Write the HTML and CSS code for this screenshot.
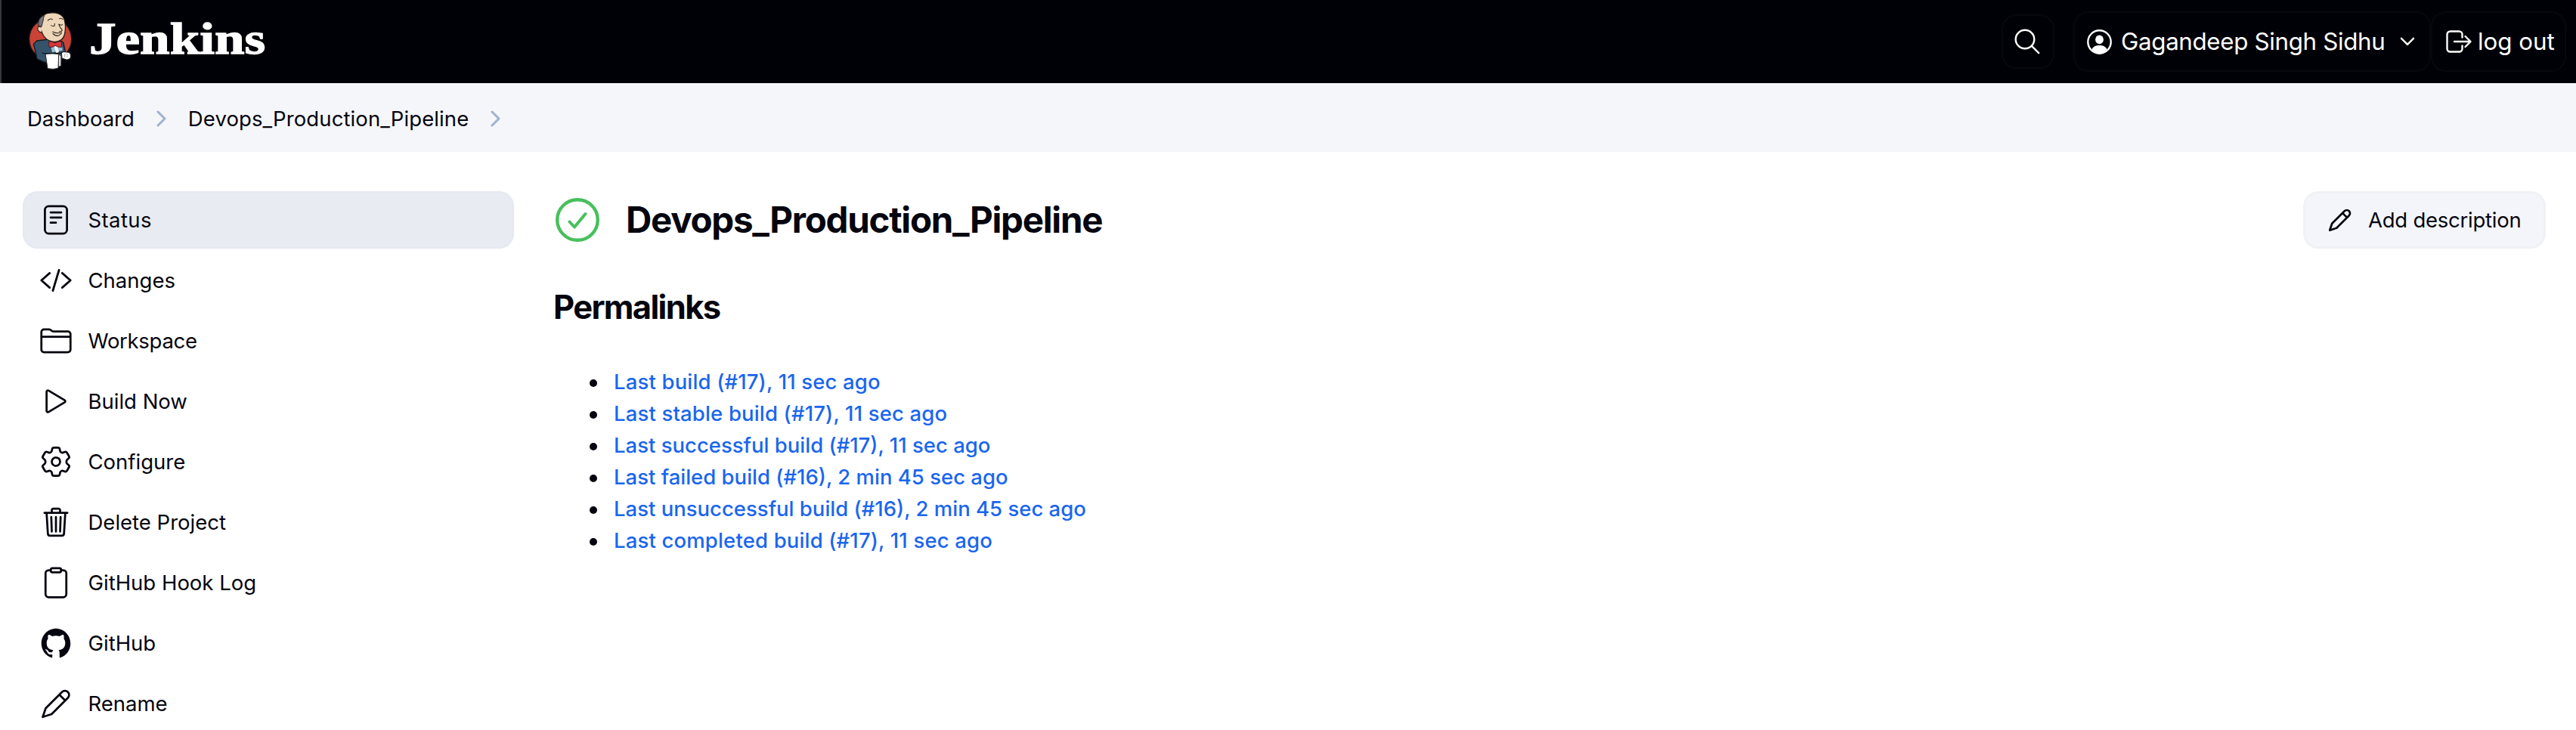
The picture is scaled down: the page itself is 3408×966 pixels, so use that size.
FILE: index.html
```html
<!DOCTYPE html>
<html lang="en">
<head>
<meta charset="utf-8">
<title>Devops_Production_Pipeline [Jenkins]</title>
<link rel="stylesheet" href="styles.css">
</head>
<body>
<header class="header">
  <svg class="logo" viewBox="0 0 270 300" aria-hidden="true">
    <ellipse cx="140" cy="155" rx="84" ry="83" fill="#cb4238" stroke="#241c1c" stroke-width="4"/>
    <path d="M86 162l-13 14 8 28 6 30 30 13 66-2 3-33 14-4-9-40-27-16z" fill="#35536a" stroke="#141a20" stroke-width="4" stroke-linejoin="round"/>
    <path d="M94 100C95 75 106 58 132 52c30-6 58 4 64 28 5 20 4 42 0 58-5 18-17 27-36 28-30 0-48-18-56-44l-10-8z" fill="#eed7b9" stroke="#241c18" stroke-width="4" stroke-linejoin="round"/>
    <path d="M94 106c-5-20 0-36 23-46-6 10-3 16-7 26-3 6-2 12-5 20-4-4-7-4-11 0z" fill="#77767c" stroke="#2a2a2e" stroke-width="3"/>
    <path d="M103 108c-12-6-16 2-12 12 4 7 9 9 14 8" fill="#eed7b9" stroke="#2c221c" stroke-width="3.5" stroke-linecap="round"/>
    <g fill="none" stroke="#33271f" stroke-width="3.2" stroke-linecap="round" stroke-linejoin="round">
      <path d="M130 81q9-9 18-4M176 74q8-3 13 3M143 101q7 5 13 2l1-9M176 97q6 5 12 1M173 96q5 14 14 23-1 7-12 6M149 126q14 8 36 4M150 133q8 10 22 9l11-8"/>
    </g>
    <path d="M137 164l20 28 26-28 6 36-42 8z" fill="#9cbbd0"/>
    <path d="M152 180l14-2 8 28-10 6z" fill="#f2f3f5"/>
    <path d="M134 165q12-2 24 6 12-8 26-6l1 22q-13 2-26-6-12 8-23 7-3-12-2-23z" fill="#d9363b" stroke="#52191b" stroke-width="3" stroke-linejoin="round"/>
    <path d="M184 210l8-5 22 3q9 6 6 22-5 8-16 7l-18-6z" fill="#fff" stroke="#27272a" stroke-width="3.5" stroke-linejoin="round"/>
    <path d="M198 213l-2 14M204 215l6 3M203 222l6 3" stroke="#777" stroke-width="2"/>
    <path d="M172 215l10 8v38l-10 4z" fill="#e2e3e5" stroke="#333" stroke-width="2"/>
    <path d="M120 214q30-4 53 1l-2 56q-20 6-42 1z" fill="#fff" stroke="#222327" stroke-width="3"/>
    <path d="M108 210q10 5 22 2l54-1" fill="none" stroke="#101518" stroke-width="4" stroke-linecap="round"/>
  </svg>
  <span class="brand"><span class="brand-text">Jenkins</span></span>
  <div class="header-actions">
    <span class="header-button search">
      <svg width="40" height="40" viewBox="0 0 40 40" fill="none" stroke="#fff" stroke-width="2.4" stroke-linecap="round"><circle cx="17" cy="17" r="12.3"/><path d="M26.2 26.2l9 9"/></svg>
    </span>
    <span class="header-button user">
      <svg width="33" height="33" viewBox="0 0 33 33"><circle cx="16.5" cy="16.5" r="15.2" fill="none" stroke="#fff" stroke-width="2.4"/><ellipse cx="16.5" cy="13.4" rx="5.4" ry="5.8" fill="#fff"/><path d="M6.4 26.2C8.5 22.2 12.5 21 16.5 21s8 1.2 10.1 5.2C24 30 20 31.5 16.5 31.5S9 30 6.4 26.2z" fill="#fff"/></svg>
      <span class="user-name">Gagandeep Singh Sidhu</span>
      <svg class="caret" width="20" height="12" viewBox="0 0 20 12" fill="none" stroke="#fff" stroke-width="2.4" stroke-linecap="round" stroke-linejoin="round"><path d="M2 1.8l8 8 8-8"/></svg>
    </span>
    <span class="header-button logout">
      <svg width="34" height="30" viewBox="0 0 34 30" fill="none" stroke="#fff" stroke-width="2.4" stroke-linecap="round" stroke-linejoin="round"><path d="M21.5 9.5V5.5a4 4 0 0 0-4-4h-12a4 4 0 0 0-4 4v19a4 4 0 0 0 4 4h12a4 4 0 0 0 4-4v-4M25.5 8l7 7-7 7M11 15h21"/></svg>
      <span>log out</span>
    </span>
  </div>
</header>

<nav class="breadcrumbs">
  <span>Dashboard</span>
  <svg class="crumb-arrow" width="14" height="22" viewBox="0 0 14 22"><path d="M2 2l9 9-9 9"/></svg>
  <span class="crumb-project">Devops_Production_Pipeline</span>
  <svg class="crumb-arrow" width="14" height="22" viewBox="0 0 14 22"><path d="M2 2l9 9-9 9"/></svg>
</nav>

<div class="page">
  <aside class="tasks">
    <a class="task active"><svg class="icon" viewBox="0 0 44 44"><rect x="7.4" y="3.9" width="29.2" height="36.2" rx="5"/><path d="M15 12h14M15 18.8h14M15 25.7h7"/></svg>Status</a>
    <a class="task"><svg class="icon" viewBox="0 0 512 512"><path class="w" d="M160 368L32 256l128-112M352 368l128-112-128-112M304 96l-96 320"/></svg>Changes</a>
    <a class="task workspace"><svg class="icon" viewBox="0 0 512 512"><path class="w" d="M440 432H72a40 40 0 01-40-40V120a40 40 0 0140-40h75.89a40 40 0 0122.19 6.72l27.84 18.56a40 40 0 0022.19 6.72H440a40 40 0 0140 40v240a40 40 0 01-40 40zM32 192h448"/></svg>Workspace</a>
    <a class="task"><svg class="icon" viewBox="0 0 512 512"><path class="w" d="M112 111v290c0 17.44 17 28.52 31 20.16l247.9-148.37c12.12-7.25 12.12-26.33 0-33.58L143 90.84c-14-8.36-31 2.72-31 20.16z"/></svg>Build Now</a>
    <a class="task"><svg class="icon" viewBox="0 0 512 512"><path class="w" d="M262.29 192.31a64 64 0 1057.4 57.4 64.13 64.13 0 00-57.4-57.4z"/><path class="w" d="M198 60q4-22 26-22h64q22 0 26 22l6 30q3 14 18 22t28 3l28-10q20-7 31 11l32 56q10 18-5 31l-23 20q-12 11-12 33t12 33l23 20q15 13 5 31l-32 56q-11 18-31 11l-28-10q-13-5-28 3t-18 22l-6 30q-4 22-26 22h-64q-22 0-26-22l-6-30q-3-14-18-22t-28-3l-28 10q-20 7-31-11l-32-56q-10-18 5-31l23-20q12-11 12-33t-12-33l-23-20q-15-13-5-31l32-56q11-18 31-11l28 10q13 5 28-3t18-22z"/></svg>Configure</a>
    <a class="task"><svg class="icon" viewBox="0 0 512 512"><path class="w" d="M112 112l20 320c.95 18.49 14.4 32 32 32h184c17.67 0 30.87-13.51 32-32l20-320M80 112h352M192 112V72a23.93 23.93 0 0124-24h80a23.93 23.93 0 0124 24v40M256 176v224M184 176l8 224M328 176l-8 224"/></svg>Delete Project</a>
    <a class="task"><svg class="icon" viewBox="0 0 512 512"><path class="w" d="M336 64h32a48 48 0 0148 48v320a48 48 0 01-48 48H144a48 48 0 01-48-48V112a48 48 0 0148-48h32"/><rect class="w" x="176" y="32" width="160" height="64" rx="26"/></svg>GitHub Hook Log</a>
    <a class="task"><svg class="icon solid" viewBox="0 0 512 512"><path d="M256 32C132.3 32 32 134.9 32 261.7c0 101.5 64.2 187.5 153.2 217.9a17.56 17.56 0 003.8.4c8.3 0 11.5-6.1 11.5-11.4 0-5.5-.2-19.9-.3-39.1a102.4 102.4 0 01-22.6 2.7c-43.1 0-52.9-33.5-52.9-33.5-10.2-26.5-24.9-33.6-24.9-33.6-19.5-13.7-.1-14.1 1.4-14.1h.1c22.5 2 34.3 23.8 34.3 23.8 11.2 19.6 26.2 25.1 39.6 25.1a63 63 0 0025.6-6c2-14.8 7.8-24.9 14.2-30.7-49.7-5.8-102-25.5-102-113.5 0-25.1 8.7-45.6 23-61.6-2.3-5.8-10-29.2 2.2-60.8a18.64 18.64 0 015-.5c8.1 0 26.4 3.1 56.6 24.1a208.21 208.21 0 01112.2 0c30.2-21 48.5-24.1 56.6-24.1a18.64 18.64 0 015 .5c12.2 31.6 4.5 55 2.2 60.8 14.3 16.1 23 36.6 23 61.6 0 88.2-52.4 107.6-102.3 113.3 8 7.1 15.2 21.1 15.2 42.5 0 30.7-.3 55.5-.3 63 0 5.4 3.1 11.5 11.4 11.5a19.35 19.35 0 004-.4C415.9 449.2 480 363.1 480 261.7 480 134.9 379.7 32 256 32z"/></svg>GitHub</a>
    <a class="task"><svg class="icon" viewBox="0 0 44 44"><path d="M4.5 39.8L8.5 28.2 30 6.7a5.5 5.5 0 0 1 7.8 7.8L16.3 36zM26.5 10.2l7.8 7.8"/></svg>Rename</a>
  </aside>

  <main class="main">
    <div class="title-row">
      <svg class="ball" viewBox="0 0 58 58"><circle cx="29" cy="29" r="26.8" stroke-width="4.4"/><path d="M18.5 31.5l6.5 7L39.5 21" stroke-width="4"/></svg>
      <h1>Devops_Production_Pipeline</h1>
      <a class="describe"><svg class="describe-icon" viewBox="3 2.5 39 39"><path d="M4.5 39.8L8.5 28.2 30 6.7a5.5 5.5 0 0 1 7.8 7.8L16.3 36zM26.5 10.2l7.8 7.8"/></svg>Add description</a>
    </div>
    <h2>Permalinks</h2>
    <ul class="permalinks">
      <li><a class="recent">Last build (#17), 11 sec ago</a></li>
      <li><a class="recent">Last stable build (#17), 11 sec ago</a></li>
      <li><a>Last successful build (#17), 11 sec ago</a></li>
      <li><a>Last failed build (#16), 2 min 45 sec ago</a></li>
      <li><a>Last unsuccessful build (#16), 2 min 45 sec ago</a></li>
      <li><a class="recent">Last completed build (#17), 11 sec ago</a></li>
    </ul>
  </main>
</div>
</body>
</html>
```
FILE: styles.css
```css
* { box-sizing: border-box; }
body {
  margin: 0;
  height: 966px;
  overflow: hidden;
  background: #fff;
  color: #05050f;
  font: 400 27.5px/42px Inter, "Liberation Sans", sans-serif;
}
svg { flex: none; }
.header {
  display: flex;
  align-items: center;
  height: 110px;
  padding: 0 13px 0 18px;
  border-left: 2px solid #37373b;
  background: #000007;
  color: #fff;
}
.logo { width: 90px; height: 100px; align-self: flex-start; }
.brand { width: 240px; margin: -8px 0 0 8px; }
.brand-text {
  display: inline-block;
  font: 700 60px/70px "Liberation Serif", serif;
  transform: scaleX(1.185);
  transform-origin: 0 50%;
  -webkit-text-stroke: 1.3px #fff;
}
.header-actions {
  display: flex;
  align-items: center;
  margin-left: auto;
  font-size: 31.3px;
}
.header-button {
  display: flex;
  align-items: center;
  height: 80px;
  border: 2px solid #07070d;
  border-radius: 20px;
  white-space: nowrap;
}
.search { width: 70px; height: 72px; margin-right: 25px; padding-left: 12px; }
.user { width: 473px; padding-left: 16px; }
.user-name { margin-left: 12px; letter-spacing: -.33px; }
.caret { margin-left: 20px; }
.logout { width: 179px; padding-left: 18px; }
.logout span { margin-left: 8px; }
.breadcrumbs {
  display: flex;
  align-items: center;
  height: 91px;
  padding: 2px 36px 0;
  background: #f5f6f9;
}
.crumb-arrow {
  margin: 0 28px 0 29px;
  fill: none;
  stroke: #9fb1d0;
  stroke-width: 3;
  stroke-linecap: round;
  stroke-linejoin: round;
}
.crumb-project { letter-spacing: .1px; }
.page { display: flex; padding: 52px 40px 0 30px; }
.tasks { display: flex; flex-direction: column; gap: 4px; width: 650px; }
.task {
  display: flex;
  align-items: center;
  gap: 20.5px;
  height: 76px;
  padding: 0 22px;
  border-radius: 20px;
}
.active { background: #e8ebf1; box-shadow: inset 0 0 0 2px #e5e9f0; letter-spacing: .4px; }
.workspace { letter-spacing: -.3px; }
.icon, .describe-icon {
  width: 44px;
  height: 44px;
  fill: none;
  stroke: #05050f;
  stroke-width: 2.75;
  stroke-linecap: round;
  stroke-linejoin: round;
}
.icon .w { stroke-width: 32; }
.solid { fill: #05050f; stroke: none; }
.main { flex: 1; margin-left: 55px; }
.title-row { display: flex; align-items: center; height: 76px; }
.ball {
  width: 58px;
  height: 58px;
  fill: none;
  stroke: #47c05c;
  stroke-linecap: round;
  stroke-linejoin: round;
}
h1 {
  margin: 0 0 0 35px;
  font-size: 47.5px;
  line-height: 60px;
  font-weight: 650;
  letter-spacing: -1.28px;
}
.describe {
  display: flex;
  align-items: center;
  gap: 22px;
  width: 321px;
  height: 76px;
  margin-left: auto;
  padding-left: 34px;
  border: 3px solid #eff1f5;
  border-radius: 20px;
  background: #f4f5fa;
  letter-spacing: -.25px;
  white-space: nowrap;
}
.describe-icon { width: 30px; height: 30px; stroke-width: 3.5; margin-left: -3px; }
h2 {
  margin: 47px 0 0 -3px;
  font-size: 43.5px;
  line-height: 60px;
  font-weight: 650;
  letter-spacing: -1.65px;
}
.permalinks { margin: 48px 0 0; padding: 0 0 0 45px; list-style: none; }
.permalinks li { display: flex; align-items: center; }
.permalinks li::before {
  content: "";
  width: 10px;
  height: 10px;
  margin: 3px 22px 0 0;
  border-radius: 50%;
  background: #05050f;
}
.permalinks a { color: #1a66ee; font-weight: 500; }
.permalinks .recent { letter-spacing: .16px; }
```
